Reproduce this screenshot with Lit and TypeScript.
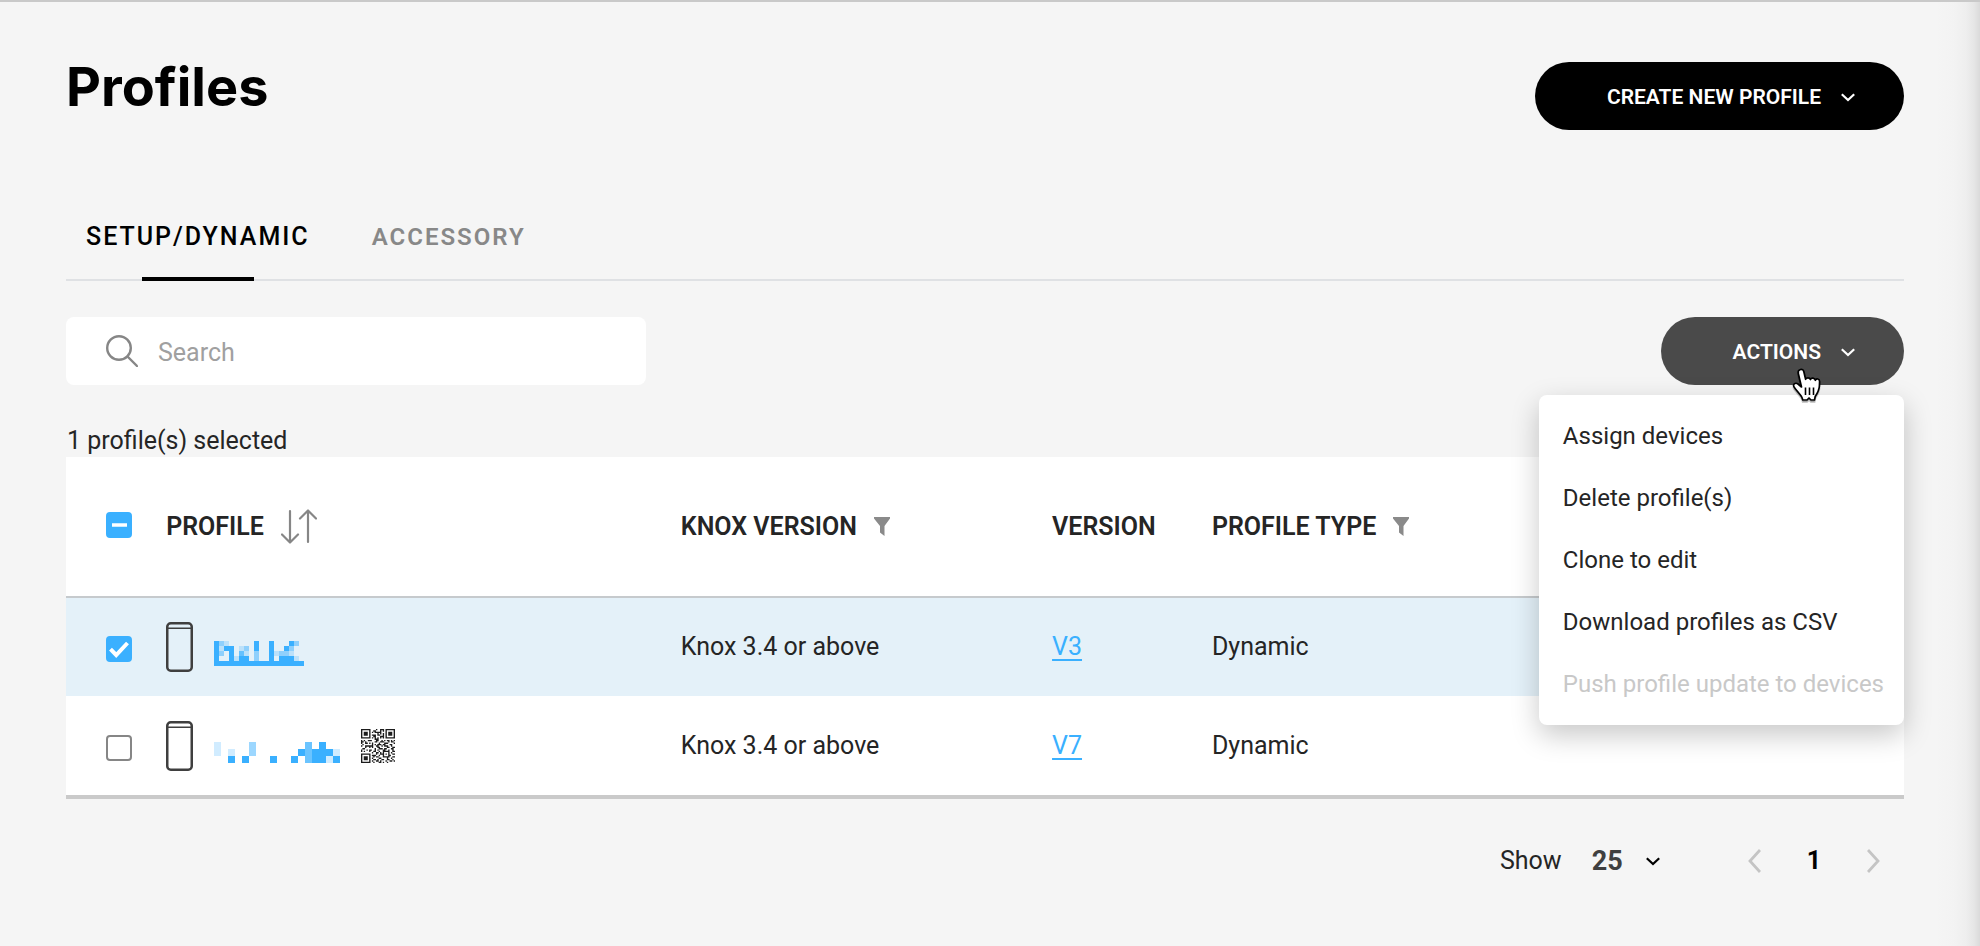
import {LitElement, html, svg, css, nothing} from "lit";
import {classMap} from "lit/directives/class-map.js";

type Mosaic = {size: number; rows: string[]};
type Profile = {id: string; selected: boolean; mosaic: Mosaic; qr: boolean; knox: string; version: string; type: string};

// Redacted names: one character per block, "." is empty, "1" is the faintest and "4" is solid.
const PROFILES: Profile[] = [
  {
    id: "p1",
    selected: true,
    mosaic: {
      size: 5,
      rows: [
        "421.....4..4...42.",
        "4144.12.4..4..42..",
        "42.4.31.2..41221..",
        "4..4144.2..4.4441.",
        "444444444444444444",
      ],
    },
    qr: false,
    knox: "Knox 3.4 or above",
    version: "V3",
    type: "Dynamic",
  },
  {
    id: "p2",
    selected: false,
    mosaic: {
      size: 7,
      rows: ["1....2.......3.4..", "1.1..2......434441", "..4.4...4..4.34414"],
    },
    qr: true,
    knox: "Knox 3.4 or above",
    version: "V7",
    type: "Dynamic",
  },
];

const SHADES: Record<string, string> = {"1": "#3ab0ff3c", "2": "#3ab0ff80", "3": "#3ab0ffc0", "4": "#3ab0ff"};

const QR = [
  "1111111....1..111.1111111",
  "1.....1..11...1.1.1.....1",
  "1.111.1.1.11111...1.111.1",
  "1.111.1.....1.1.1.1.111.1",
  "1.111.1.111.11..1.1.111.1",
  "1.....1..11...111.1.....1",
  "1111111.1.1.1.1.1.1111111",
  "..........111............",
  "1.1..111...11..1.1.11.1.1",
  "11.1......11..111...1.11.",
  "1..11.1.1....1...111....1",
  ".1......1.1.111.11...11..",
  "1..111111..11..1.111..1..",
  "...1..1.1...11.....11..11",
  ".11.......1..111.11...11.",
  "1...1.11..1.1...11..1..1.",
  "1.1...1..11..1..11111..11",
  "........1..11.1.1...1.1..",
  "1111111....1..111.1.1..11",
  "1.....1.111..1..1...11...",
  "1.111.1..1.11...11111..11",
  "1.111.1.1....11....1..1..",
  "1.111.1..11.1..11..11..1.",
  "1.....1.1..11.1...1..11.1",
  "1111111..1...11.1..1.....",
];

const MENU = [
  {label: "Assign devices", disabled: false},
  {label: "Delete profile(s)", disabled: false},
  {label: "Clone to edit", disabled: false},
  {label: "Download profiles as CSV", disabled: false},
  {label: "Push profile update to devices", disabled: true},
];

const chevronDown = html`<svg width="14" height="9" viewBox="0 0 14 9" fill="none" stroke="currentColor" stroke-width="2.2" aria-hidden="true"><path d="M.8 1.200L7 7l6.200-5.800" /></svg>`;
const filterIcon = html`<svg width="16" height="19" viewBox="0 0 16 19" fill="#8a8a8a" aria-hidden="true"><path d="M0 0h16v1.500L10.500 9v10L6 15.500V9L0 1.500z" /></svg>`;
const sortIcon = html`<svg width="36" height="35" viewBox="0 0 36 35" fill="none" stroke="#868686" stroke-width="2.2" stroke-linecap="round" stroke-linejoin="round" aria-hidden="true"><path d="M9 2v31M1 25.500l8 8 8-8M27 33V2M19 9.500l8-8 8 8" /></svg>`;
const phoneIcon = html`<svg width="27" height="50" viewBox="0 0 27 50" fill="none" stroke="#3f3f3f" aria-hidden="true"><rect x="1.250" y="1.250" width="24.500" height="47.500" rx="3.500" stroke-width="2.500" /><path d="M2 6.250h23" stroke-width="1.500" /></svg>`;

class AppRoot extends LitElement {
  static properties = {profiles: {state: true}, menuOpen: {state: true}};

  static styles = css`
    :host {
      display: block;
      box-sizing: border-box;
      min-height: 100vh;
      padding: 60px 76px 60px 66px;
      border-top: 2px solid #c9c9c9;
      background: linear-gradient(to left, #dadada, #e6e6e6 6px, #eeeeee 14px, #f3f3f3 26px, #f5f5f5 44px);
      color: #252525;
      font: 400 25px/30px Roboto, "Noto Sans", sans-serif;
    }
    *, *::before, *::after { box-sizing: border-box; }
    button, input, select { font: inherit; color: inherit; border: 0; margin: 0; padding: 0; background: none; }
    svg { display: block; flex: none; }
    .head, .toolbar { display: flex; justify-content: space-between; align-items: flex-start; }
    h1 { margin: 0; color: #000; font: 700 54px/50px Inter, sans-serif; }
    .pill {
      display: flex;
      align-items: center;
      gap: 20px;
      height: 68px;
      padding: 2px 49px 0 72px;
      border-radius: 34px;
      background: #000;
      color: #fff;
      font-size: 21px;
      font-weight: 600;
      white-space: nowrap;
    }
    .pill.hovered { background: #4a4a4a; }
    .tabs {
      display: flex;
      gap: 62px;
      margin-top: 92px;
      padding-left: 20px;
      border-bottom: 2px solid #dfe1e4;
    }
    .tab {
      position: relative;
      padding-bottom: 27px;
      color: #888;
      font-size: 24px;
      font-weight: 600;
      letter-spacing: 2px;
    }
    .tab.active { color: #000; font-size: 25px; font-weight: 500; }
    .tab.active::after {
      content: "";
      position: absolute;
      left: 25%;
      bottom: -2px;
      width: 50%;
      height: 4px;
      background: #000;
    }
    .toolbar { margin-top: 36px; }
    .search {
      display: flex;
      align-items: center;
      gap: 20px;
      width: 32%;
      min-width: 300px;
      max-width: 580px;
      height: 68px;
      padding: 0 40px;
      border-radius: 8px;
      background: #fff;
    }
    .search input { flex: 1; min-width: 0; padding-top: 4px; outline: 0; }
    .search input::placeholder { color: #a0a0a0; opacity: 1; }
    .actions { position: relative; }
    .menu {
      position: absolute;
      z-index: 2;
      top: 78px;
      right: 0;
      margin: 0;
      padding: 10px 0;
      list-style: none;
      border-radius: 8px;
      background: #fff;
      box-shadow: 0 10px 28px #00000038;
    }
    .menu button {
      width: 100%;
      height: 62px;
      padding: 0 20px 0 24px;
      text-align: left;
      font-size: 24px;
      white-space: nowrap;
    }
    .menu button:disabled { color: #c8c8c8; }
    .pointer { position: absolute; z-index: 3; top: 50px; right: 80px; pointer-events: none; }
    .count { margin: 40px 0 0; padding: 1px; }
    table {
      width: 100%;
      table-layout: fixed;
      border-collapse: separate;
      border-spacing: 0;
      border-bottom: 4px solid #cacaca;
      background: #fff;
    }
    th, td { padding: 0; text-align: left; vertical-align: middle; }
    th { height: 141px; border-bottom: 2px solid #c6cacd; font-weight: 600; }
    td { height: 98px; }
    tbody tr + tr td { height: 99px; border-top: 1px solid #fff; }
    .selected td { background: #e4f1f9; }
    .c-check { width: 5.45%; }
    .c-profile { width: 28%; }
    .c-knox { width: 20.2%; }
    .c-version { width: 8.7%; }
    .pick { padding-left: 40px; }
    th.pick { padding-bottom: 4px; }
    td.pick { padding-top: 4px; }
    .cell { display: flex; align-items: center; gap: 17px; white-space: nowrap; }
    .name { display: flex; align-items: center; gap: 21px; }
    a { color: #3ab0ff; text-underline-offset: 4px; text-decoration-thickness: 2px; }
    .blocks { padding-top: 13px; }
    input[type="checkbox"] {
      display: block;
      appearance: none;
      width: 26px;
      height: 26px;
      border: 2px solid #868686;
      border-radius: 4px;
      background: #fff center / 26px 26px no-repeat;
    }
    input[type="checkbox"]:checked, input[type="checkbox"]:indeterminate { border-color: #3ab0ff; background-color: #3ab0ff; }
    input[type="checkbox"]:checked {
      background-image: url("data:image/svg+xml,%3Csvg xmlns='http://www.w3.org/2000/svg' viewBox='0 0 26 26'%3E%3Cpath d='M4.500 13.200l5.700 5.800L21.500 7' fill='none' stroke='%23fff' stroke-width='4'/%3E%3C/svg%3E");
    }
    input[type="checkbox"]:indeterminate {
      background-image: url("data:image/svg+xml,%3Csvg xmlns='http://www.w3.org/2000/svg' viewBox='0 0 26 26'%3E%3Cpath d='M6 13h15' fill='none' stroke='%23fff' stroke-width='3.500'/%3E%3C/svg%3E");
    }
    .pager {
      display: flex;
      justify-content: flex-end;
      align-items: center;
      margin-top: 45px;
      padding-right: 24px;
    }
    .size { display: flex; align-items: center; }
    .size select {
      width: 98px;
      height: 34px;
      padding-left: 30px;
      margin-right: 88px;
      appearance: none;
      color: #3f3f3f;
      font-size: 27px;
      font-weight: 700;
      background: url("data:image/svg+xml,%3Csvg xmlns='http://www.w3.org/2000/svg' width='14' height='9' viewBox='0 0 14 9'%3E%3Cpath d='M.8 1.200L7 7l6.200-5.800' fill='none' stroke='%23000' stroke-width='2.200'/%3E%3C/svg%3E") right center no-repeat;
    }
    .pages { display: flex; align-items: center; gap: 46px; }
    .pages svg { color: #c4c4c4; }
    .page { color: #000; font-weight: 700; }
  `;

  profiles = PROFILES;
  menuOpen = true;

  private toggle(id: string) {
    this.profiles = this.profiles.map((p) => (p.id === id ? {...p, selected: !p.selected} : p));
  }

  private toggleAll(on: boolean) {
    this.profiles = this.profiles.map((p) => ({...p, selected: on}));
  }

  private blocks({size, rows}: Mosaic) {
    return html`<svg class="blocks" width=${rows[0].length * size} height=${rows.length * size + 13} shape-rendering="crispEdges" aria-hidden="true">
      ${rows.flatMap((row, y) => [...row].map((c, x) => c === "." ? nothing : svg`<rect x=${x * size} y=${y * size} width=${size} height=${size} fill=${SHADES[c]} />`))}
    </svg>`;
  }

  private qr() {
    const d = QR.flatMap((row, y) => [...row].map((c, x) => (c === "1" ? `M${x} ${y}h1v1h-1z` : ""))).join("");
    return html`<svg width="34" height="34" viewBox="0 0 25 25" fill="#1c1c1c" role="img" aria-label="QR code"><path d=${d} /></svg>`;
  }

  private row(p: Profile) {
    return html`<tr class=${classMap({selected: p.selected})}>
      <td class="pick"><input type="checkbox" aria-label="Select profile" .checked=${p.selected} @change=${() => this.toggle(p.id)} /></td>
      <td>
        <div class="name">
          ${phoneIcon}
          <a href="#${p.id}" aria-label="Open profile">${this.blocks(p.mosaic)}</a>
          ${p.qr ? this.qr() : nothing}
        </div>
      </td>
      <td>${p.knox}</td>
      <td><a href="#${p.id}-version">${p.version}</a></td>
      <td>${p.type}</td>
    </tr>`;
  }

  render() {
    const count = this.profiles.filter((p) => p.selected).length;
    const all = count === this.profiles.length;
    return html`
      <header class="head">
        <h1>Profiles</h1>
        <button class="pill" type="button">CREATE NEW PROFILE ${chevronDown}</button>
      </header>
      <nav class="tabs" role="tablist">
        <button class="tab active" role="tab" aria-selected="true">SETUP/DYNAMIC</button>
        <button class="tab" role="tab" aria-selected="false">ACCESSORY</button>
      </nav>
      <div class="toolbar">
        <label class="search">
          <svg width="32" height="32" viewBox="0 0 32 32" fill="none" stroke="#868686" stroke-width="2.4" aria-hidden="true"><circle cx="13" cy="13" r="11.800" /><path d="M21.500 21.500l9.500 9.500" stroke-linecap="round" /></svg>
          <input type="search" placeholder="Search" aria-label="Search" />
        </label>
        <div class="actions">
          <button class="pill hovered" type="button" aria-haspopup="menu" aria-expanded=${this.menuOpen} @click=${() => (this.menuOpen = !this.menuOpen)}>ACTIONS ${chevronDown}</button>
          ${this.menuOpen ? html`<ul class="menu" role="menu">
            ${MENU.map((m) => html`<li role="none"><button role="menuitem" type="button" ?disabled=${m.disabled}>${m.label}</button></li>`)}
          </ul>` : nothing}
          <svg class="pointer" width="34" height="38" viewBox="0 0 34 38" aria-hidden="true">
            <path d="M10.500 2.500c-2 .5-2.700 2-2.200 4l3.200 13.500-3.500-3c-2-1.500-4.500-.5-4.500 1.500 0 1 .8 2 1.800 3.200l5.500 6.800c1 1.300 1.500 2.500 2 4.500h4.200l2-2 2 2h3.500l.7-3.500c2-3 4-6 4.200-10.500l.2-4.500c0-3-3.500-3.200-4.200-1.200-.6-2.600-4.200-3-5-.8-.8-2.200-4-2.200-4.800-.2L13.800 4.500c-.4-1.500-1.800-2.400-3.300-2z" fill="#0003" stroke="#0003" stroke-width="2" transform="translate(0 2)" />
            <path d="M10.500 2.500c-2 .5-2.700 2-2.200 4l3.200 13.500-3.500-3c-2-1.500-4.500-.5-4.500 1.500 0 1 .8 2 1.800 3.200l5.500 6.800c1 1.300 1.500 2.500 2 4.500h4.200l2-2 2 2h3.500l.7-3.500c2-3 4-6 4.200-10.500l.2-4.500c0-3-3.500-3.200-4.200-1.200-.6-2.600-4.200-3-5-.8-.8-2.200-4-2.200-4.800-.2L13.800 4.500c-.4-1.500-1.800-2.400-3.300-2z" fill="#fff" stroke="#000" stroke-width="1.700" stroke-linejoin="round" />
            <path d="M15.500 20.500v7.500M19.500 20.500v7.500M23.500 20.500v7.500" stroke="#000" stroke-width="1.600" />
          </svg>
        </div>
      </div>
      <p class="count">${count} profile(s) selected</p>
      <table>
        <colgroup><col class="c-check" /><col class="c-profile" /><col class="c-knox" /><col class="c-version" /><col /></colgroup>
        <thead>
          <tr>
            <th class="pick"><input type="checkbox" aria-label="Select all profiles" .checked=${all} .indeterminate=${count > 0 && !all} @change=${(e: Event) => this.toggleAll((e.target as HTMLInputElement).checked)} /></th>
            <th><div class="cell">PROFILE ${sortIcon}</div></th>
            <th><div class="cell">KNOX VERSION ${filterIcon}</div></th>
            <th>VERSION</th>
            <th><div class="cell">PROFILE TYPE ${filterIcon}</div></th>
          </tr>
        </thead>
        <tbody>${this.profiles.map((p) => this.row(p))}</tbody>
      </table>
      <footer class="pager">
        <label class="size">Show
          <select><option>25</option><option>50</option><option>100</option></select>
        </label>
        <nav class="pages" aria-label="Pages">
          <button type="button" aria-label="Previous page"><svg width="13" height="24" viewBox="0 0 13 24" fill="none" stroke="currentColor" stroke-width="2.800"><path d="M12 1L2 12l10 11" /></svg></button>
          <span class="page">1</span>
          <button type="button" aria-label="Next page"><svg width="13" height="24" viewBox="0 0 13 24" fill="none" stroke="currentColor" stroke-width="2.800"><path d="M1 1l10 11L1 23" /></svg></button>
        </nav>
      </footer>
    `;
  }
}

customElements.define("app-root", AppRoot);
